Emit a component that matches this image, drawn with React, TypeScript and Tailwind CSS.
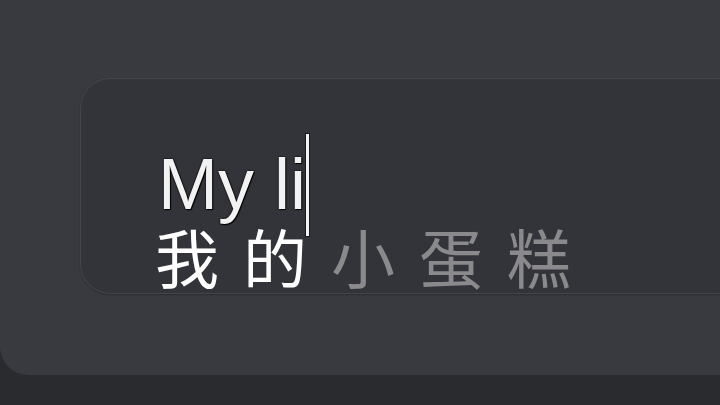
export default function App() {
  return (
    <div className="w-[720px] h-[405px] overflow-hidden bg-[#2a2b2f]">
      <div className="h-[375px] bg-[#393a40] rounded-bl-[28px] pt-[78px] pl-[80px]">
        <div className="h-[216px] bg-[#333439] rounded-l-[30px] border border-r-0 border-[#44454b] shadow-[0_1px_2px_rgba(0,0,0,0.25)] pt-[69px] pl-[77px]">
          <div className="flex flex-col">
            <div className="h-[72px] leading-[72px]">
              <span className="relative inline-block text-[72px] leading-[72px] text-[#f2f2f2] [font-family:'Liberation_Sans',Arial,sans-serif] [text-shadow:0_0_2px_#000,0_0_1px_#000,1px_1px_1px_#000]">
                My li
                <span className="absolute right-[-4px] top-[-15px] w-[5px] h-[104px] bg-[#f4f4f4] border border-[#1a1a1a]" />
              </span>
            </div>
            <div className="mt-[3px] ml-[-3px] flex gap-[24px] text-[64px] leading-[64px] [font-family:'Noto_Sans_CJK_SC','Noto_Sans',sans-serif]">
              <span className="text-white">我</span>
              <span className="text-white">的</span>
              <span className="text-[#8a8a8c]">小</span>
              <span className="text-[#8a8a8c]">蛋</span>
              <span className="text-[#8a8a8c]">糕</span>
            </div>
          </div>
        </div>
      </div>
    </div>
  );
}
